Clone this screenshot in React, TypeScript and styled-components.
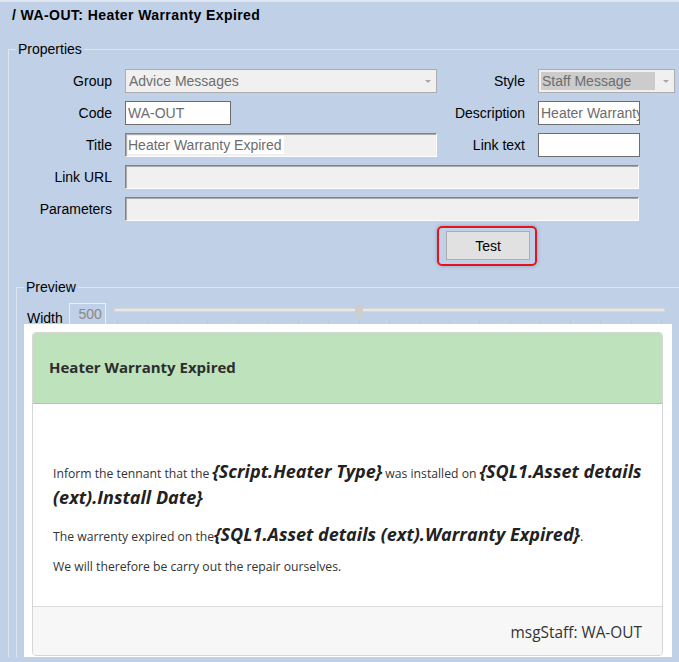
import React from "react";
import styled, { createGlobalStyle } from "styled-components";

// Global
const GlobalStyle = createGlobalStyle`
  html, body {
    margin: 0;
    padding: 0;
    background: #bfd0e7;
  }
  body {
    overflow: hidden;
    font-family: "Liberation Sans", Arial, sans-serif;
  }
`;

// Styled Components
const Page = styled.div`
  width: 679px;
  height: 662px;
  overflow: hidden;
  box-sizing: border-box;
  background: #bfd0e7;
  border-top: 2px solid #dfe7f2;
  padding-left: 8px;
`;

const Header = styled.div`
  height: 26px;
  line-height: 26px;
  padding-left: 4px;
  font-size: 14px;
  font-weight: bold;
  letter-spacing: 0.42px;
  color: #000;
`;

const GroupBox = styled.fieldset<{ $width: number; $offset?: number; $top: number }>`
  margin: ${(p) => p.$top}px 0 0 ${(p) => p.$offset ?? 0}px;
  padding: 0;
  width: ${(p) => p.$width}px;
  min-width: 0;
  box-sizing: border-box;
  border: 1px solid #dce5f0;
  border-right: none;
  border-bottom: none;
`;

const GroupLegend = styled.legend`
  margin-left: 7px;
  padding: 0 2px;
  font-size: 14px;
  line-height: 16px;
  color: #000;
`;

const PropGrid = styled.div`
  display: grid;
  grid-template-columns: 103px 312px 75px 141px;
  grid-template-rows: repeat(5, 24px) auto;
  column-gap: 13px;
  row-gap: 8px;
  padding-top: 12px;
  align-items: center;
`;

const Label = styled.div`
  text-align: right;
  font-size: 14px;
  color: #000;
  white-space: nowrap;
`;

const Combo = styled.div<{ $width: number }>`
  width: ${(p) => p.$width}px;
  height: 24px;
  box-sizing: border-box;
  border: 1px solid #adadad;
  background: #f0f0f0;
  display: flex;
  align-items: center;
  padding-left: 2px;
`;

const ComboText = styled.span<{ $selected?: boolean }>`
  flex: 1;
  height: 18px;
  line-height: 18px;
  padding-left: 1px;
  font-size: 14px;
  color: #6d6d6d;
  white-space: nowrap;
  overflow: hidden;
  background: ${(p) => (p.$selected ? "#cccccc" : "transparent")};
`;

const ComboArrow = styled.span`
  width: 0;
  height: 0;
  border-left: 3px solid transparent;
  border-right: 3px solid transparent;
  border-top: 3px solid #a8a8a8;
  margin: 1px 5px 0 8px;
`;

const TextBox = styled.div<{ $width: number; $sunken?: boolean; $span?: boolean }>`
  width: ${(p) => p.$width}px;
  height: 24px;
  box-sizing: border-box;
  display: flex;
  align-items: center;
  padding-left: 2px;
  overflow: hidden;
  white-space: nowrap;
  font-size: 14px;
  color: #6d6d6d;
  grid-column: ${(p) => (p.$span ? "2 / 5" : "auto")};
  background: ${(p) => (p.$sunken ? "#f0f0f0" : "#ffffff")};
  border: 1px solid;
  border-color: ${(p) =>
    p.$sunken ? "#828282 #ffffff #ffffff #828282" : "#6e6e6e"};
  box-shadow: ${(p) => (p.$sunken ? "inset 1px 1px 0 #a9a9a9" : "none")};
`;

const SelectedText = styled.span`
  background: #ffffff;
  line-height: 18px;
  padding-right: 2px;
`;

const TestHighlight = styled.div`
  grid-column: 3;
  justify-self: start;
  align-self: start;
  margin: -3px 0 0 -13px;
  width: fit-content;
  border: 2px solid #e4141c;
  border-radius: 5px;
  padding: 3px 5px 4px 7px;
  box-shadow: 0 0 4px rgba(70, 70, 110, 0.35);
`;

const TestButton = styled.button`
  display: block;
  width: 84px;
  height: 29px;
  margin: 0;
  background: #e1e1e1;
  border: 1px solid #adadad;
  font-family: "Liberation Sans", Arial, sans-serif;
  font-size: 14px;
  color: #000;
`;

const WidthRow = styled.div`
  display: flex;
  align-items: flex-start;
  height: 22px;
  padding: 7px 0 0 10px;
`;

const WidthLabel = styled.div`
  align-self: flex-end;
  font-size: 14px;
  line-height: 16px;
  margin-bottom: -2px;
  color: #000;
`;

const NumBox = styled.div`
  width: 37px;
  height: 21px;
  margin: 1px 0 0 6px;
  box-sizing: border-box;
  border: 1px solid #eaeff6;
  border-bottom: none;
  text-align: right;
  padding-right: 3px;
  font-size: 14px;
  line-height: 20px;
  color: #8a8a8a;
`;

const Slider = styled.div`
  position: relative;
  width: 551px;
  height: 22px;
  margin-left: 8px;
`;

const SliderTrack = styled.div`
  position: absolute;
  left: 0;
  right: 0;
  top: 6px;
  height: 4px;
  box-sizing: border-box;
  background: #e7e7e7;
  border: 1px solid #d6d6d6;
`;

const SliderThumb = styled.div`
  position: absolute;
  left: 241px;
  top: 3px;
  width: 8px;
  height: 12px;
  background: #cdcdcd;
  border-radius: 1px;
`;

const TickRow = styled.div`
  position: absolute;
  left: 3px;
  right: 3px;
  top: 18px;
  height: 4px;
  display: flex;
  justify-content: space-between;
`;

const Tick = styled.span`
  width: 1px;
  height: 4px;
  background: #c3c8cf;
`;

const PreviewPanel = styled.div`
  width: 648px;
  margin-left: 7px;
  box-sizing: border-box;
  background: #ffffff;
  padding: 8px 9px 1px 8px;
`;

const Card = styled.div`
  border: 1px solid #d6d6d6;
  border-radius: 4px;
  overflow: hidden;
  font-family: "Open Sans", "Noto Sans", sans-serif;
  color: #333;
`;

const CardHeader = styled.div`
  height: 71px;
  box-sizing: border-box;
  display: flex;
  align-items: center;
  padding: 0 0 3px 16px;
  background: #bde2bc;
  border-bottom: 1px solid #a6cca6;
  font-size: 15px;
  font-weight: 700;
  color: #2d2d2d;
`;

const CardBody = styled.div`
  padding: 54px 20px 19px;
  font-size: 12.2px;
  line-height: 1.5;
`;

const Para = styled.p`
  margin: 0 0 11px;
`;

const Field = styled.span`
  font-size: 18px;
  font-weight: 700;
  font-style: italic;
  line-height: 26px;
  color: #222;
`;

const CardFooter = styled.div`
  height: 45px;
  padding: 3px 20px 0 0;
  display: flex;
  align-items: center;
  justify-content: flex-end;
  background: #f7f7f7;
  border-top: 1px solid #dcdcdc;
  font-size: 15.4px;
  color: #333;
`;

const TICKS = Array.from({ length: 19 }, (_, i) => i);

const App = () => {
  return (
    <>
      <GlobalStyle />
      <Page>
        <Header>/ WA-OUT: Heater Warranty Expired</Header>

        <GroupBox $width={720} $top={13}>
          <GroupLegend>Properties</GroupLegend>
          <PropGrid>
            <Label>Group</Label>
            <Combo $width={312}>
              <ComboText>Advice Messages</ComboText>
              <ComboArrow />
            </Combo>
            <Label>Style</Label>
            <Combo $width={137}>
              <ComboText $selected>Staff Message</ComboText>
              <ComboArrow />
            </Combo>

            <Label>Code</Label>
            <TextBox $width={106}>WA-OUT</TextBox>
            <Label>Description</Label>
            <TextBox $width={102}>Heater Warranty Expired</TextBox>

            <Label>Title</Label>
            <TextBox $width={312} $sunken>
              <SelectedText>Heater Warranty Expired</SelectedText>
            </TextBox>
            <Label>Link text</Label>
            <TextBox $width={102} />

            <Label>Link URL</Label>
            <TextBox $width={514} $sunken $span />

            <Label>Parameters</Label>
            <TextBox $width={514} $sunken $span />

            <TestHighlight>
              <TestButton type="button">Test</TestButton>
            </TestHighlight>
          </PropGrid>

          <GroupBox $width={720} $offset={7} $top={13}>
            <GroupLegend>Preview</GroupLegend>
            <WidthRow>
              <WidthLabel>Width</WidthLabel>
              <NumBox>500</NumBox>
              <Slider>
                <SliderTrack />
                <SliderThumb />
                <TickRow>
                  {TICKS.map((t) => (
                    <Tick key={t} />
                  ))}
                </TickRow>
              </Slider>
            </WidthRow>

            <PreviewPanel>
              <Card>
                <CardHeader>Heater Warranty Expired</CardHeader>
                <CardBody>
                  <Para>
                    Inform the tennant that the <Field>{"{Script.Heater Type}"}</Field> was
                    installed on <Field>{"{SQL1.Asset details (ext).Install Date}"}</Field>
                  </Para>
                  <Para>
                    The warrenty expired on the
                    <Field>{"{SQL1.Asset details (ext).Warranty Expired}"}</Field>.
                  </Para>
                  <Para>We will therefore be carry out the repair ourselves.</Para>
                </CardBody>
                <CardFooter>msgStaff: WA-OUT</CardFooter>
              </Card>
            </PreviewPanel>
          </GroupBox>
        </GroupBox>
      </Page>
    </>
  );
};

export default App;
